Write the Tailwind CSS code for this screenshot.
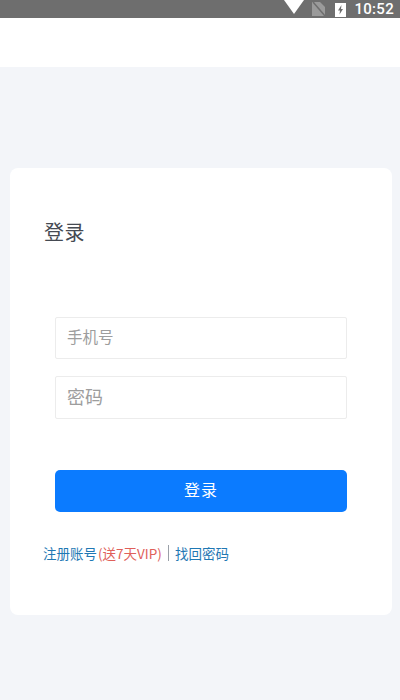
<!DOCTYPE html>
<html lang="zh-CN">
<head>
  <meta charset="UTF-8">
  <meta name="viewport" content="width=device-width, initial-scale=1.0">
  <title>登录</title>
  <script src="https://cdn.jsdelivr.net/npm/@tailwindcss/browser@4"></script>
</head>
<body class="h-[700px] overflow-hidden bg-[#f3f5f9] flex flex-col font-['Noto_Sans_CJK_SC','Noto_Sans',sans-serif]">
  <!-- Status bar -->
  <div class="h-[18px] bg-[#6e6e6e] flex items-center justify-end text-white">
    <svg class="w-[22px] h-[14px] self-start mr-[7px]" viewBox="0 0 22 14"><path d="M1 0H21L11 14Z" fill="#fff"/></svg>
    <svg class="w-[13px] h-[14px] mr-[10px]" viewBox="0 0 13 14"><path d="M0 0H8L13 5V14H0Z" fill="#9a9a9a"/><path d="M1 0L13 14" stroke="#6e6e6e" stroke-width="1.5"/></svg>
    <svg class="w-[11px] h-[15px] mr-[8px]" viewBox="0 0 11 15"><path d="M0 1H11V15H0Z" fill="#fff"/><path d="M6.5 3L3 8.500H5L4.500 12.500L8 7H6Z" fill="#6e6e6e"/></svg>
    <span class="text-[15px] leading-[18px] font-['Roboto',sans-serif] font-medium mr-[6px] tracking-[0.3px]">10:52</span>
  </div>

  <!-- Header -->
  <div class="h-[49px] bg-white"></div>

  <!-- Login card -->
  <div class="mt-[101px] ml-[10px] w-[382px] h-[447px] bg-white rounded-lg pt-[49px] px-[34px]">
    <h1 class="text-[20px] leading-[30px] text-[#454a52] font-normal tracking-[0.5px]">登录</h1>
    <div class="mt-[70px] ml-[11px] w-[292px] flex flex-col gap-[17px]">
      <input type="text" placeholder="手机号" class="h-[42px] pl-[11px] pb-[4px] text-[15.500px] border border-[#ececec] rounded-[2px] placeholder:text-[#9d9d9d] outline-none">
      <input type="password" placeholder="密码" class="h-[43px] pl-[11px] pb-[3px] text-[18px] border border-[#ececec] rounded-[2px] placeholder:text-[#9d9d9d] outline-none">
      <button class="mt-[34px] h-[42px] pb-[5px] bg-[#0b7bff] text-white text-[16px] rounded-[5px] tracking-[1px]">登录</button>
    </div>
    <div class="mt-[31px] -ml-px text-[13.500px] leading-[20px] text-[#1f78b4] flex items-center">
      <span>注册账号</span><span class="ml-px text-[#e0605a]">(送7天VIP)</span>
      <span class="w-px h-[16px] bg-[#9aa0a8] mx-[6px]"></span>
      <span>找回密码</span>
    </div>
  </div>
</body>
</html>
